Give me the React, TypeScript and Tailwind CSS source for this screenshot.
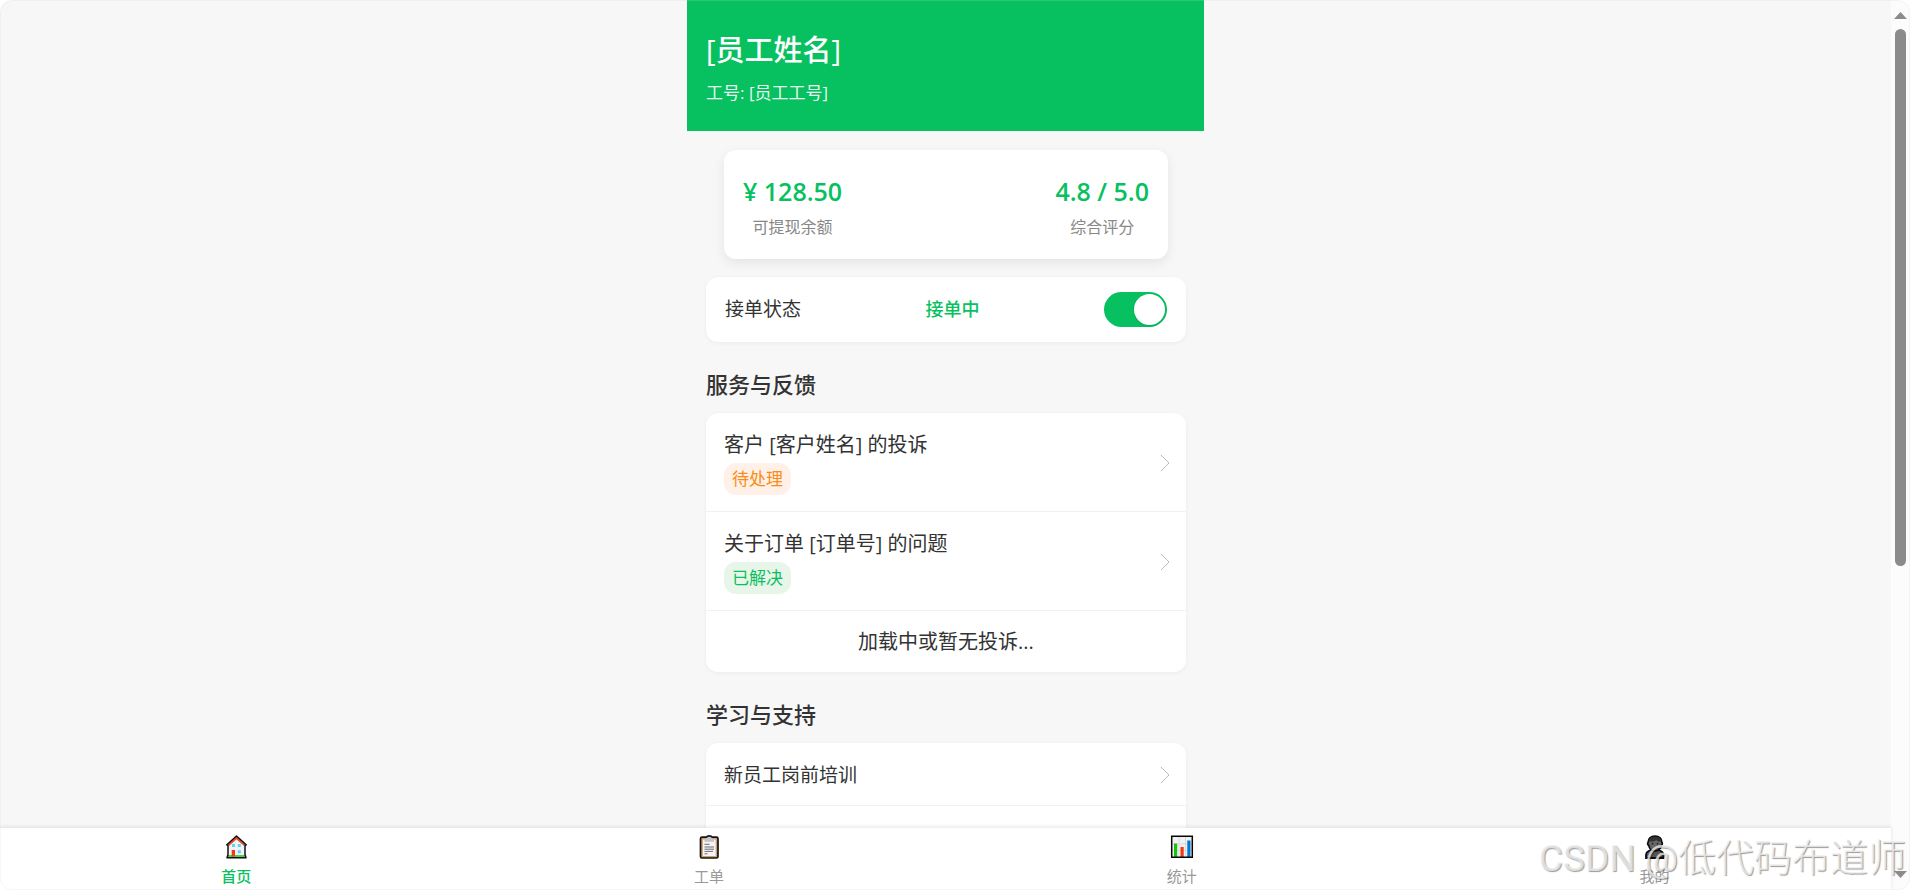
import React from 'react';

const complaints = [
  { title: '客户 [客户姓名] 的投诉', status: '待处理', badge: 'bg-[#fff1e8] text-[#fa8c16]' },
  { title: '关于订单 [订单号] 的问题', status: '已解决', badge: 'bg-[#e8f5e9] text-[#07c160]' },
];

const tabs = [
  { label: '首页', icon: HomeIcon, active: true },
  { label: '工单', icon: ClipboardIcon, active: false },
  { label: '统计', icon: ChartIcon, active: false },
  { label: '我的', icon: UserIcon, active: false },
];

function HomeIcon() {
  return (
    <svg className="w-6 h-6" viewBox="0 0 24 24">
      <path d="M4 9.500V22h17V9.500L12.500 2z" fill="#f3f3f5" />
      <path d="M3.500 20.300h18v1.500h-18z" fill="#16c60c" />
      <path d="M7.700 15H11v6.500H7.700z" fill="#f03a17" />
      <path d="M8 9h3v3H8zM13.800 9h3v3h-3zM13.800 15.200h3v3h-3z" fill="#55d5ff" />
      <path d="M4 10.500l8.500-7.500 8.500 7.500" fill="none" stroke="#e8492f" strokeWidth="2.200" />
      <path d="M4 19.500V11L2.800 9.800 12.500 1l9.700 8.800L21 11v8.500l1 3.200H3z" fill="none" stroke="#111" strokeWidth="1.500" strokeLinejoin="round" />
    </svg>
  );
}

function ClipboardIcon() {
  return (
    <svg className="w-6 h-6" viewBox="0 0 24 24">
      <rect x="3.500" y="2.200" width="17.500" height="20.800" rx="1.500" fill="#d39b6a" stroke="#151515" strokeWidth="1.700" />
      <path d="M5.800 4.500h12.900v16.500H5.800z" fill="#f5f5f7" />
      <path d="M9.500 3a3 2 0 0 1 5.500 0l2 1.500v2.200H7.500V4.500z" fill="#c4c4c8" />
      <path d="M9.500 2.200C10 .4 14.500 .4 15 2.200" fill="none" stroke="#151515" strokeWidth="1.500" />
      <path d="M7.500 9.300h5M7.500 12h9.500M7.500 14.200h9.500M7.500 16.400h8.500M7.500 18.800h3" stroke="#6b6b70" strokeWidth="1" />
    </svg>
  );
}

function ChartIcon() {
  return (
    <svg className="w-6 h-6" viewBox="0 0 24 24">
      <path d="M1.800 1.800h20.400v21H1.800z" fill="#f2f2f4" />
      <path d="M9 2v20M15.500 2v20M2 9h20M2 15.500h20" stroke="#d9d9dd" strokeWidth="1" />
      <path d="M4 8.500h3.200V22H4z" fill="#16c60c" />
      <path d="M10.500 12h3.200v10h-3.200z" fill="#f03a17" />
      <path d="M17.300 5.500h3.200V22h-3.200z" fill="#0078d4" />
      <path d="M1.700 1.300h20.600v21H1.700z" fill="none" stroke="#050505" strokeWidth="1.500" />
    </svg>
  );
}

function UserIcon() {
  return (
    <svg className="w-6 h-6" viewBox="0 0 24 24">
      <path d="M3 23v-3c0-2.500 1.500-4 5-5h7.500c3.500 1 5 2.500 5 5v3z" fill="#555" stroke="#0c0c0c" strokeWidth="1.800" />
      <path d="M12 1.200c4.500 0 6.800 2.800 6.800 5.800 1 1.200 .5 3-.6 3.600C17.500 14 15 16 12 16s-5.500-2-6.200-5.400c-1.100-.6-1.600-2.400-.6-3.600 0-3 2.300-5.800 6.800-5.800z" fill="#666" stroke="#0c0c0c" strokeWidth="1.700" />
      <path d="M5.800 6.500c0-6.500 12.400-6.500 12.400 0-2 .2-4-.4-5-1.500-1.500 1.200-4.400 1.900-7.400 1.500z" fill="#333" />
      <circle cx="9.500" cy="8.700" r=".8" fill="#111" />
      <circle cx="14.500" cy="8.700" r=".8" fill="#111" />
    </svg>
  );
}

function Chevron() {
  return (
    <svg className="w-3 h-5 shrink-0" viewBox="0 0 12 20" fill="none" stroke="#bbb">
      <path d="M2 2l8 8-8 8" />
    </svg>
  );
}

function SectionTitle({ children }: { children: React.ReactNode }) {
  return <h2 className="mt-[26px] mb-[13px] text-[22px] leading-8 font-medium">{children}</h2>;
}

export default function App() {
  return (
    <div className="bg-white">
      <div className="flex h-screen overflow-hidden rounded-xl bg-[#f7f7f7] text-[#333] font-['Open_Sans','Noto_Sans_CJK_SC',sans-serif] relative">
        <div className="flex-1 min-w-0 flex flex-col">
          <main className="flex-1 min-h-0 overflow-hidden">
            <div className="w-full max-w-[517px] mx-auto">
              <header className="bg-[#07c160] text-white px-[19px] pt-7 pb-6">
                <h1 className="text-[29px] leading-11 font-medium">[员工姓名]</h1>
                <p className="mt-[7px] text-[17px] leading-7 opacity-90">工号: [员工工号]</p>
              </header>

              <div className="pl-[19px] pr-[18px]">
                <section className="mx-[18px] mt-[19px] h-[109px] px-[19px] flex items-center justify-between bg-white rounded-xl shadow-[0_4px_12px_rgba(0,0,0,0.08)]">
                  <div className="text-center">
                    <div className="mt-1 text-[25px] leading-9 font-semibold text-[#07c160]">¥ 128.50</div>
                    <div className="mt-1 text-base leading-7 text-[#888]">可提现余额</div>
                  </div>
                  <div className="text-center">
                    <div className="mt-1 text-[25px] leading-9 font-semibold text-[#07c160]">4.8 / 5.0</div>
                    <div className="mt-1 text-base leading-7 text-[#888]">综合评分</div>
                  </div>
                </section>

                <section className="mt-[18px] h-[65px] px-[19px] flex items-center justify-between bg-white rounded-xl shadow-[0_1px_4px_rgba(0,0,0,0.05)]">
                  <label htmlFor="accepting" className="text-[19px]">接单状态</label>
                  <span className="text-[18px] font-medium text-[#07c160]">接单中</span>
                  <input
                    id="accepting"
                    type="checkbox"
                    role="switch"
                    defaultChecked
                    className="appearance-none w-[63px] h-[35px] p-0.5 rounded-full bg-[#ddd] checked:bg-[#07c160] flex items-center checked:justify-end before:content-[''] before:w-[31px] before:h-[31px] before:rounded-full before:bg-white before:shadow-sm"
                  />
                </section>

                <SectionTitle>服务与反馈</SectionTitle>
                <ul className="bg-white rounded-xl shadow-[0_1px_4px_rgba(0,0,0,0.05)] divide-y divide-[#f2f2f2]">
                  {complaints.map((item) => (
                    <li key={item.title}>
                      <a href="#" className="flex items-center justify-between h-[98px] pt-0.5 pl-[18px] pr-[15px]">
                        <div className="flex flex-col items-start gap-1">
                          <span className="text-[20px] leading-7">{item.title}</span>
                          <span className={`px-2 rounded-xl text-[17px] leading-8 ${item.badge}`}>{item.status}</span>
                        </div>
                        <Chevron />
                      </a>
                    </li>
                  ))}
                  <li className="h-[61px] flex items-center justify-center text-[20px]">加载中或暂无投诉...</li>
                </ul>

                <SectionTitle>学习与支持</SectionTitle>
                <ul className="bg-white rounded-xl shadow-[0_1px_4px_rgba(0,0,0,0.05)] divide-y divide-[#f2f2f2]">
                  <li>
                    <a href="#" className="flex items-center justify-between h-[62px] pt-0.5 pl-[18px] pr-[15px] text-[19px]">
                      新员工岗前培训
                      <Chevron />
                    </a>
                  </li>
                  <li className="h-[62px]"></li>
                </ul>
              </div>
            </div>
          </main>

          <nav className="h-[62px] grid grid-cols-4 bg-white shadow-[0_-1px_4px_rgba(0,0,0,0.1)] relative">
            {tabs.map(({ label, icon: Icon, active }) => (
              <a
                key={label}
                href="#"
                className={`flex flex-col items-center pt-[7px] gap-[3px] text-[15px] leading-7 ${active ? 'text-[#07c160] font-medium' : 'text-[#999]'}`}
              >
                <Icon />
                <span>{label}</span>
              </a>
            ))}
          </nav>
        </div>

        {/* Scrollbar */}
        <div className="w-[19px] flex flex-col items-center bg-[#fcfcfc] py-3">
          <svg className="w-[13px] h-[7px]" viewBox="0 0 13 7" fill="#8b8b8b">
            <path d="M6.500 0L13 7H0z" />
          </svg>
          <div className="mt-2.5 h-[62%] w-[11px] rounded-full bg-[#8b8b8b]"></div>
          <svg className="mt-auto w-[13px] h-[7px]" viewBox="0 0 13 7" fill="#8b8b8b">
            <path d="M6.500 7L0 0h13z" />
          </svg>
        </div>

        {/* Window edge */}
        <div className="absolute inset-0 rounded-xl border border-gray-300/20 pointer-events-none"></div>

        {/* Watermark */}
        <div className="absolute right-1 bottom-1 text-[38px] leading-[54px] whitespace-nowrap font-light text-[#f0f0f0]/80 font-['Roboto','Noto_Sans_CJK_SC',sans-serif] [text-shadow:1px_1px_1px_rgba(0,0,0,0.4)] pointer-events-none">
          <span className="text-[37px] font-normal">CSDN @</span>低代码布道师
        </div>
      </div>
    </div>
  );
}
